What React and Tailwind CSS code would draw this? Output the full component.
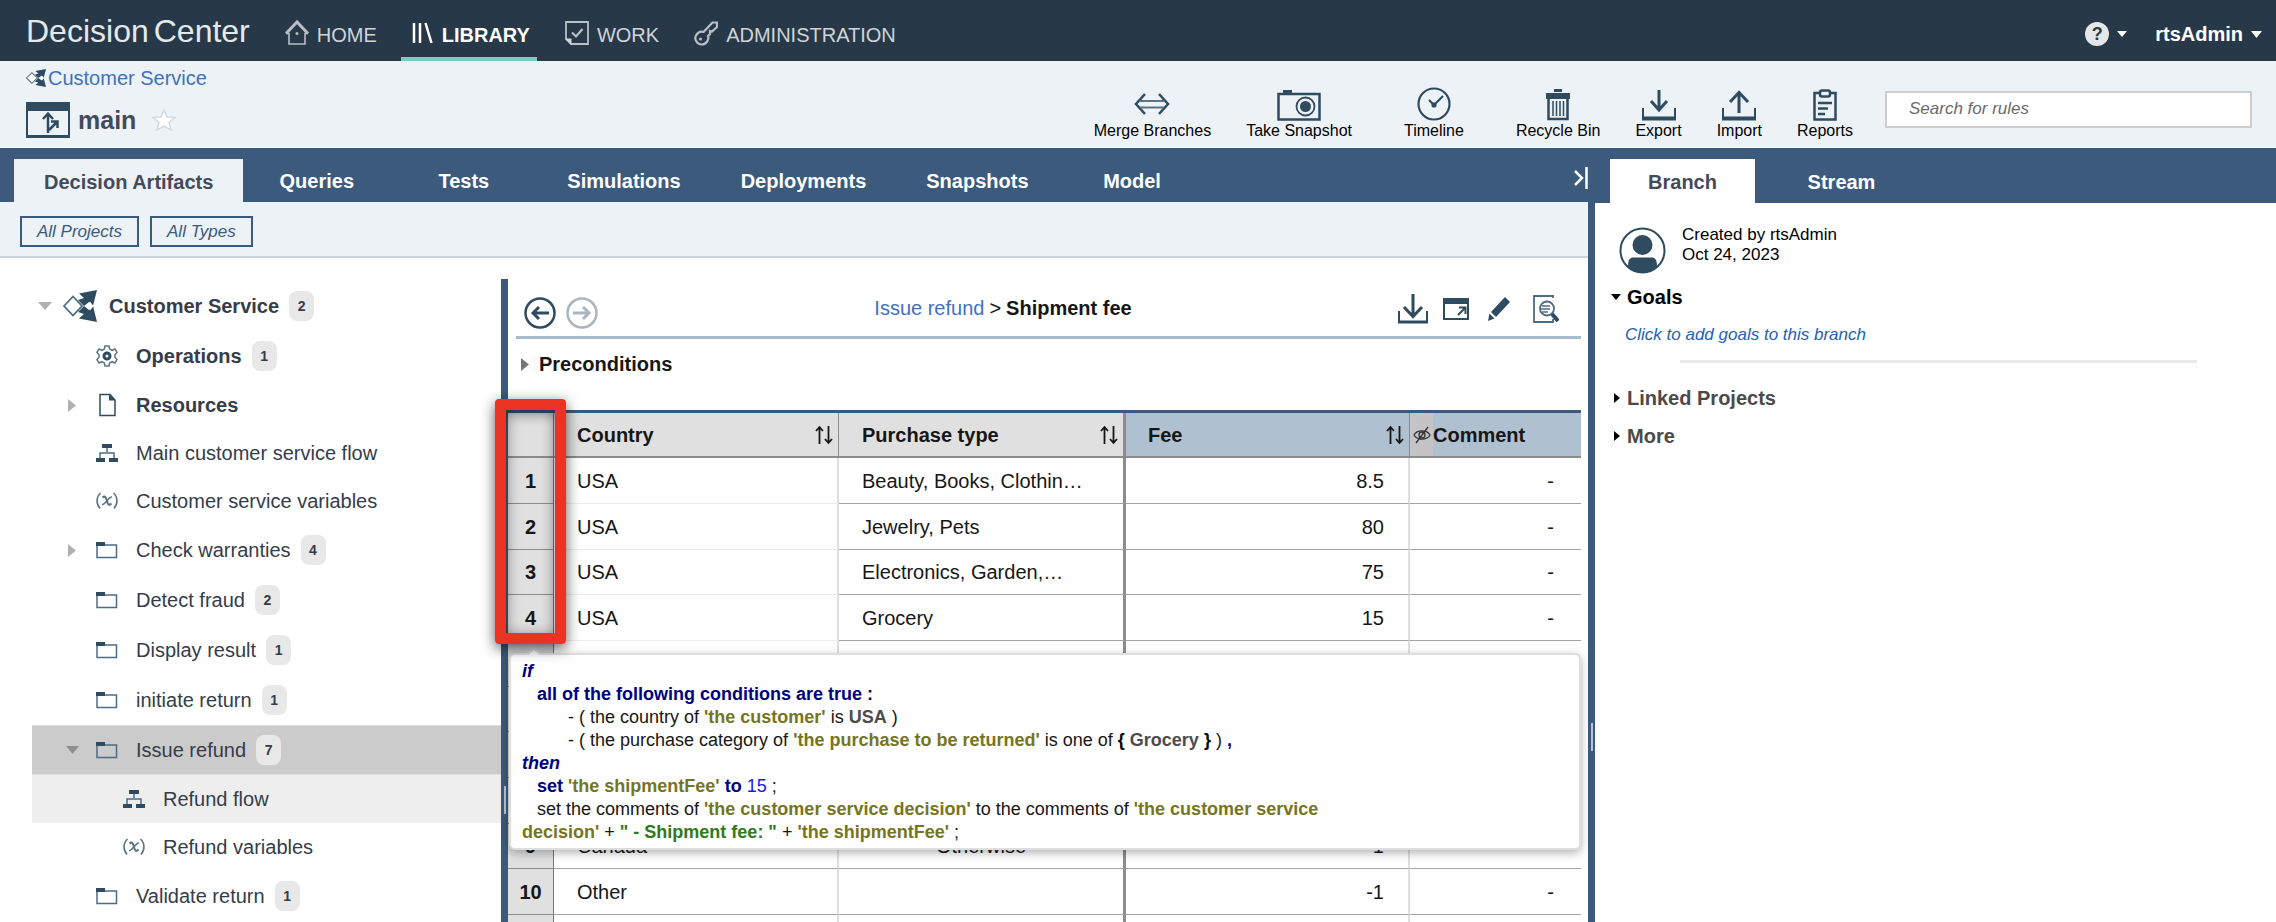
const INK = '#2f4b60';

function Svg({ w, h, children, ...rest }) {
  return (
    <svg width={w} height={h} viewBox={`0 0 ${w} ${h}`} fill="none" stroke={INK} strokeWidth="2" className="shrink-0" aria-hidden="true" {...rest}>
      {children}
    </svg>
  );
}

function ProjectIcon({ w = 34, h = 32 }) {
  return (
    <svg width={w} height={h} viewBox="0 0 34 32" preserveAspectRatio="none" fill="none" className="shrink-0" aria-hidden="true">
      <path d="M1 16 10 6.500 19 16 10 25.500Z" stroke="#4d6b85" strokeWidth="1.800" fill="#fff" />
      <path d="M15 10 21 8 16 3.500 34 0 30 16 26 12 21 16 26 20 30 16 34 32 16 28.500 21 24 15 22 21 16Z" fill={INK} />
      <path d="M27 11.500 30.500 16 27 20.500 24 16Z" fill="#fff" />
    </svg>
  );
}

const FolderIcon = () => (
  <Svg w={22} h={18} stroke="#4d6b85" strokeWidth="1.500">
    <path d="M1 4H20.500V16.500H1Z" />
    <path d="M0 1H9V5H0Z" fill={INK} stroke="none" />
  </Svg>
);
const FlowIcon = () => (
  <Svg w={22} h={20} strokeWidth="1.500" stroke="#4d6b85">
    <path d="M11 4V9M4 15V10H18V15" />
    <path d="M6 1H16V5H6ZM0 15H9V19H0ZM13 15H22V19H13Z" fill={INK} stroke="none" />
  </Svg>
);
const VarIcon = () => (
  <Svg w={22} h={18} strokeWidth="1.600" stroke="#5c7284">
    <path d="M4.500 1C0 5 0 12 4 16.500M17.500 1C22 5 22 12 18 16.500" />
    <path d="M6.500 5.500C9 3.500 10 5 11 9S13 14 15.500 11.500" strokeWidth="2" />
    <path d="M16 5C13 4 9 13.500 6 12.500" strokeWidth="1.600" />
  </Svg>
);
const GearIcon = () => (
  <Svg w={22} h={22} stroke="#5c7284" strokeWidth="1.500">
    <path d="M9 1h4l.6 3 2.400 1.300L19 4l2 3.500-2 2.200v2.600l2 2.200-2 3.500-3-1.300L13.600 18 13 21H9l-.6-3L6 16.700 3 18 1 14.500l2-2.200V9.700L1 7.500 3 4l3 1.300L8.400 4Z" />
    <circle cx="11" cy="11" r="3" stroke={INK} strokeWidth="3" />
  </Svg>
);
const PageIcon = () => (
  <Svg w={22} h={24} strokeWidth="1.500">
    <path d="M4 1.500H14L19 7V22.500H4Z" />
    <path d="M13 1 19.500 7.500H13Z" fill={INK} stroke="none" />
  </Svg>
);
const SortIcon = () => (
  <Svg w={20} h={20} stroke="#161616" strokeWidth="1.800">
    <path d="M5.500 19V2M2 6 5.500 2 9 6M14.500 1V18M11 14 14.500 18 18 14" />
  </Svg>
);
const DownloadIcon = () => (
  <Svg w={30} h={30}>
    <path d="M15 0V22M6 13 15 22.500 24 13" strokeWidth="3" />
    <path d="M1 17V28M29 17V28" />
    <path d="M0 28H30" strokeWidth="3" />
  </Svg>
);

const Caret = ({ dir = 'down', color = '#fff', w = 10, h = 6 }) => (
  <svg width={w} height={h} viewBox="0 0 10 10" preserveAspectRatio="none" className="shrink-0" aria-hidden="true">
    <path d={dir === 'down' ? 'M0 0H10L5 10Z' : 'M0 0 10 5 0 10Z'} fill={color} />
  </svg>
);

const NAV = [
  {
    label: 'HOME',
    icon: (
      <Svg w={24} h={26} stroke="#b9bfc5">
        <path d="M1 13.500 12 2 23 13.500" strokeWidth="3" />
        <path d="M1 13.500H4V24H20V13.500H23" strokeWidth="1.600" />
        <circle cx="12" cy="13.500" r="1.500" fill="#b9bfc5" stroke="none" />
      </Svg>
    ),
  },
  {
    label: 'LIBRARY',
    active: true,
    icon: (
      <Svg w={22} h={24} stroke="#fff" strokeWidth="2.500">
        <path d="M2 2V22M8 2V22M13.500 2 19.500 22" />
      </Svg>
    ),
  },
  {
    label: 'WORK',
    icon: (
      <Svg w={24} h={24} stroke="#b9bfc5" strokeWidth="1.800">
        <path d="M1 1H23V23H6L1 18Z" />
        <path d="M0 17.500H6.500V24Z" fill="#d0d4d8" stroke="none" />
        <path d="M7 11.500 11 15.500 17.500 8" strokeWidth="2.200" />
      </Svg>
    ),
  },
  {
    label: 'ADMINISTRATION',
    icon: (
      <Svg w={24} h={26} stroke="#b9bfc5" strokeWidth="2.200">
        <path d="M9.500 12 18.500 2.500H23V7L18 11.500 16 11 16 14 14 16C15.500 20 12 24.500 7.500 24.500S0 19 2 15.500 7 11 9.500 12Z" />
        <circle cx="6.500" cy="19" r="1.500" fill="#b9bfc5" stroke="none" />
      </Svg>
    ),
  },
];

const TOOLS = [
  {
    label: 'Merge Branches',
    icon: (
      <Svg w={36} h={32} strokeWidth="2.500">
        <path d="M11 5 2 15 11 25M25 5 34 15 25 25" />
        <path d="M6 12H30M6 18.500H30" strokeWidth="2" stroke="#5c7284" />
      </Svg>
    ),
  },
  {
    label: 'Take Snapshot',
    icon: (
      <Svg w={44} h={32} strokeWidth="2.500">
        <path d="M1.500 5H42.500V30.500H1.500Z" />
        <path d="M6 1H15V5H6Z" fill={INK} stroke="none" />
        <circle cx="28.500" cy="17.500" r="9" strokeWidth="1.800" />
        <circle cx="28.500" cy="17.500" r="5.500" fill={INK} stroke="none" />
      </Svg>
    ),
  },
  {
    label: 'Timeline',
    wide: true,
    icon: (
      <Svg w={34} h={34} strokeWidth="2.200">
        <circle cx="17" cy="17" r="15.500" />
        <path d="M12 13 17 18 26 9" />
        <circle cx="17" cy="18" r="1.500" fill={INK} />
      </Svg>
    ),
  },
  {
    label: 'Recycle Bin',
    icon: (
      <Svg w={24} h={32}>
        <path d="M8 0H16V3H8ZM0 4H24V10H0Z" fill={INK} stroke="none" />
        <path d="M2.500 10V30H21.500V10" strokeWidth="2.500" />
        <path d="M7 12V27M10.500 12V27M14 12V27M17.500 12V27" strokeWidth="1.500" />
      </Svg>
    ),
  },
  {
    label: 'Export',
    icon: (
      <Svg w={34} h={32}>
        <path d="M17 1V20M9 12 17 21 25 12" strokeWidth="3" />
        <path d="M1 19V30M33 19V30" />
        <path d="M0 29.500H34" strokeWidth="4" />
      </Svg>
    ),
  },
  {
    label: 'Import',
    icon: (
      <Svg w={34} h={32}>
        <path d="M17 24V4M8 13 17 3.500 26 13" strokeWidth="3" />
        <path d="M1 19V30M33 19V30" />
        <path d="M0 29.500H34" strokeWidth="4" />
      </Svg>
    ),
  },
  {
    label: 'Reports',
    icon: (
      <Svg w={24} h={32} strokeWidth="2.500">
        <path d="M6 4H1.500V30.500H22.500V4H18" />
        <rect x="7" y="1.500" width="10" height="6" rx="2" />
        <path d="M5 14H19M5 19.500H15M5 25H12" />
      </Svg>
    ),
  },
];

const TABS = ['Decision Artifacts', 'Queries', 'Tests', 'Simulations', 'Deployments', 'Snapshots', 'Model'];

const TREE = [
  { label: 'Operations', count: 1, icon: GearIcon, bold: true },
  { label: 'Resources', icon: PageIcon, bold: true, arrow: 'right' },
  { label: 'Main customer service flow', icon: FlowIcon },
  { label: 'Customer service variables', icon: VarIcon },
  { label: 'Check warranties', count: 4, icon: FolderIcon, arrow: 'right' },
  { label: 'Detect fraud', count: 2, icon: FolderIcon },
  { label: 'Display result', count: 1, icon: FolderIcon },
  { label: 'initiate return', count: 1, icon: FolderIcon },
  { label: 'Issue refund', count: 7, icon: FolderIcon, arrow: 'down', selected: true },
  { label: 'Refund flow', icon: FlowIcon, child: true, shaded: true },
  { label: 'Refund variables', icon: VarIcon, child: true },
  { label: 'Validate return', count: 1, icon: FolderIcon },
];

const ROWS = [
  { n: '1', country: 'USA', type: 'Beauty, Books, Clothin…', fee: '8.5', comment: '-', span: true },
  { n: '2', country: 'USA', type: 'Jewelry, Pets', fee: '80', comment: '-', span: true },
  { n: '3', country: 'USA', type: 'Electronics, Garden,…', fee: '75', comment: '-', span: true },
  { n: '4', country: 'USA', type: 'Grocery', fee: '15', comment: '-', span: true },
  {},
  {},
  {},
  {},
  { n: '9', country: 'Canada', type: 'Otherwise', center: true, fee: '-1', comment: '' },
  { n: '10', country: 'Other', type: '', fee: '-1', comment: '-' },
  {},
];

function Count({ children }) {
  return <span className="flex h-[30px] w-[25px] items-center justify-center rounded-lg bg-[#e8e8e8] text-sm font-bold">{children}</span>;
}

function TreeRow({ item }) {
  const Icon = item.icon;
  return (
    <li
      className={`ml-8 flex items-center ${item.count ? 'h-[50px]' : 'h-12'} ${item.selected ? 'border-y border-[#dedede] bg-[#cbcbcb]' : ''} ${item.shaded ? 'bg-[#eeeeee]' : ''}`}
    >
      <span className={`flex justify-center ${item.child ? 'w-[91px]' : 'w-16'}`}>
        {item.arrow && (
          <span className="flex w-14 justify-center pl-4">
            {item.arrow === 'right' ? <Caret dir="right" color="#b0b0b0" w={8} h={13} /> : <Caret color="#909090" w={13} h={8} />}
          </span>
        )}
      </span>
      <Icon />
      <a href="#" className={`ml-[18px] mr-[10px] ${item.bold ? 'font-bold' : ''}`}>
        {item.label}
      </a>
      {item.count && <Count>{item.count}</Count>}
    </li>
  );
}

const V = ({ children }) => <b className="text-[#76751f]">{children}</b>;
const K = ({ children }) => <b className="text-[#000080]">{children}</b>;

function RuleTooltip() {
  return (
    <div role="tooltip" className="absolute inset-x-0 top-[243px] ml-px rounded-md border-2 border-[#dedede] bg-[#fefefe] pb-[4px] pl-[11px] pt-[5px] text-lg leading-[23px] text-[#161616] shadow-[0_3px_10px_rgba(0,0,0,0.3)]">
      <div className="absolute -top-[6px] left-[18px] size-[10px] rotate-45 border-l-2 border-t-2 border-[#dedede] bg-[#fefefe]" />
      <p><i><K>if</K></i></p>
      <p className="pl-[15px]"><K>all of the following conditions are true :</K></p>
      <p className="pl-[46px]">- ( the country of <V>'the customer'</V> is <b className="text-[#4d4d4d]">USA</b> )</p>
      <p className="pl-[46px]">
        - ( the purchase category of <V>'the purchase to be returned'</V> is one of <b className="text-black">{'{'}</b> <b className="text-[#4d4d4d]">Grocery</b> <b className="text-black">{'}'}</b> ) <K>,</K>
      </p>
      <p><i><K>then</K></i></p>
      <p className="pl-[15px]"><K>set</K> <V>'the shipmentFee'</V> <K>to</K> <span className="text-[#1a1ae6]">15</span> ;</p>
      <p className="pl-[15px]">set the comments of <V>'the customer service decision'</V> to the comments of <V>'the customer service</V></p>
      <p><V>decision'</V> + <b className="text-[#2f7a1a]">" - Shipment fee: "</b> + <V>'the shipmentFee'</V> ;</p>
    </div>
  );
}

function RuleTable() {
  const th = 'h-[45px] border-b-2 border-b-[#8c8c8c] p-0 text-left font-bold';
  return (
    <table className="w-full table-fixed border-separate border-spacing-0 border-t-[3px] border-t-[#3b5a7c] text-[#161616]">
      <colgroup>
        <col className="w-[46px]" />
        <col className="w-[285px]" />
        <col className="w-[287px]" />
        <col className="w-[284px]" />
        <col />
      </colgroup>
      <thead>
        <tr>
          <th className={`${th} border-r border-r-[#777] bg-[#e0e0e0]`} aria-label="Row" />
          <th className={`${th} border-r border-r-[#8c8c8c] bg-[#e0e0e0]`}>
            <div className="flex items-center justify-between pl-[23px] pr-1">Country<SortIcon /></div>
          </th>
          <th className={`${th} border-r-[3px] border-r-[#8c8c8c] bg-[#e0e0e0]`}>
            <div className="flex items-center justify-between pl-[23px] pr-1">Purchase type<SortIcon /></div>
          </th>
          <th className={`${th} border-r border-r-[#8c8c8c] bg-[#afc0d1]`}>
            <div className="flex items-center justify-between pl-[22px] pr-1">Fee<SortIcon /></div>
          </th>
          <th className={`${th} bg-[#afc0d1]`}>
            <div className="flex h-full items-center">
              <span className="flex h-[43px] w-[23px] items-center justify-center bg-[#c4c4c4]">
                <Svg w={18} h={18} stroke="#333" strokeWidth="1.300">
                  <path d="M1 9C4 3.500 14 3.500 17 9 14 14.500 4 14.500 1 9ZM3 17 15 1" />
                  <circle cx="9" cy="9" r="3" />
                </Svg>
              </span>
              Comment
            </div>
          </th>
        </tr>
      </thead>
      <tbody>
        {ROWS.map((r, i) => (
          <tr key={i} className="h-[46px] [&:nth-child(3n)]:h-[45px] [&>td]:border-b [&>td]:border-b-[#a3a3a3] [&>td]:p-0">
            <th scope="row" className="border-b border-r border-b-[#8c8c8c] border-r-[#777] bg-[#e0e0e0] p-0 text-center font-bold">{r.n}</th>
            <td className={`border-r-2 border-r-[#dedede] ${r.span ? 'border-b-[#ececec]!' : ''}`}>
              <div className="pl-[23px]">{r.country}</div>
            </td>
            <td className="border-r-[3px] border-r-[#8c8c8c]">
              <div className={r.center ? 'text-center' : 'pl-[23px]'}>{r.type}</div>
            </td>
            <td className="border-r-2 border-r-[#dedede]">
              <div className="pr-6 text-right">{r.fee}</div>
            </td>
            <td>
              <div className="pr-[27px] text-right">{r.comment}</div>
            </td>
          </tr>
        ))}
      </tbody>
    </table>
  );
}

function Center() {
  return (
    <section className="min-w-0 flex-1 pr-[7px]">
      <div className="ml-2 flex h-[60px] items-center justify-between border-b-[3px] border-[#a9bbcf]">
        <div className="flex items-center gap-[10px] pl-2 pt-[10px]">
          <button aria-label="Back">
            <Svg w={32} h={32} strokeWidth="2.500">
              <circle cx="16" cy="16" r="14.500" />
              <path d="M25 16H9M15 10 9 16 15 22" strokeWidth="3" />
            </Svg>
          </button>
          <button aria-label="Forward">
            <Svg w={32} h={32} stroke="#aab5bf" strokeWidth="2.500">
              <circle cx="16" cy="16" r="14.500" />
              <path d="M7 16H23M17 10 23 16 17 22" strokeWidth="3" />
            </Svg>
          </button>
        </div>
        <div className="flex gap-[5px] pl-[10px] text-[#161616]">
          <a href="#" className="text-[#4071bf]">Issue refund</a>
          <span>&gt;</span>
          <b>Shipment fee</b>
        </div>
        <div className="flex items-center gap-[15px] pr-[22px] pt-[2px]">
          <button aria-label="Download"><DownloadIcon /></button>
          <button aria-label="Open in window">
            <Svg w={26} h={22}>
              <path d="M1 1H25V21H1Z" />
              <path d="M0 0H26V6H0Z" fill={INK} stroke="none" />
              <path d="M15 17 22 10M16 9.500H22.500V16" />
            </Svg>
          </button>
          <button aria-label="Edit" className="px-1">
            <Svg w={22} h={24} stroke="none" fill={INK}>
              <path d="M17 0 22 5 8 20 3 15ZM1.500 16.500 6.500 21.500 0 24Z" />
            </Svg>
          </button>
          <button aria-label="Review" className="pl-1">
            <Svg w={26} h={28} stroke="#4d6b85" strokeWidth="1.800">
              <path d="M20 3V1H1V27H20V24" />
              <circle cx="14" cy="13.500" r="7" />
              <path d="M9 11H17M8 14H17M9 17H15" strokeWidth="1.500" />
              <path d="M19 19 25 26" strokeWidth="4" stroke={INK} />
            </Svg>
          </button>
        </div>
      </div>
      <button className="flex h-[50px] items-center gap-[10px] pl-[13px] font-bold text-[#161616]">
        <Caret dir="right" color="#777" w={8} h={13} />
        Preconditions
      </button>
      <div className="relative mt-[21px]">
        <RuleTable />
        <RuleTooltip />
        <div className="absolute -left-[13px] -top-[11px] h-[245px] w-[71px] rounded border-[11px] border-[#ea3323] shadow-[0_4px_14px_rgba(0,0,0,0.65),inset_0_3px_14px_rgba(0,0,0,0.5)]" />
      </div>
    </section>
  );
}

function Splitter({ className }) {
  return (
    <div className={`flex w-[7px] shrink-0 flex-col items-center bg-[#3b5a7c] ${className}`}>
      <span className="h-7 w-[2px] bg-[#b5c3d2]" />
    </div>
  );
}

export default function App() {
  return (
    <div className="flex h-screen flex-col overflow-hidden bg-white font-['Liberation_Sans',Arial,sans-serif] text-xl leading-6 text-[#353c4a]">
      <header className="flex h-[61px] shrink-0 items-center bg-[#273949] pl-[26px] pr-[14px]">
        <div className="flex gap-[5px] text-[32px] leading-none text-[#e6e9ec]">
          <span>Decision</span>
          <span>Center</span>
        </div>
        <nav className="ml-[24px] flex h-full items-stretch gap-[17px] text-[#d0d4d8]">
          {NAV.map((n) => (
            <a
              key={n.label}
              href="#"
              className={`flex items-center gap-2 border-b-4 pl-[11px] pr-[7px] pt-3 ${n.active ? 'border-[#6ed0c0] font-bold text-white' : 'border-transparent'}`}
            >
              <span className="pb-1">{n.icon}</span>
              {n.label}
            </a>
          ))}
        </nav>
        <div className="ml-auto flex items-center gap-7 pt-[7px] text-white">
          <button className="flex items-center gap-2" aria-label="Help">
            <span className="flex size-6 items-center justify-center rounded-full bg-[#e4e6e8] text-lg font-bold text-[#273949]">?</span>
            <Caret />
          </button>
          <button className="flex items-center gap-2 font-bold">rtsAdmin<Caret w={11} h={7} /></button>
        </div>
      </header>

      <div className="flex h-[87px] shrink-0 items-center border-b border-white bg-[#edf2f7] pl-[26px] pr-6">
        <div className="flex flex-col gap-3 pb-[5px]">
          <div className="flex items-center gap-[2px]">
            <ProjectIcon w={20} h={18} />
            <a href="#" className="text-[#4071bf]">Customer Service</a>
          </div>
          <div className="flex items-center gap-[8px]">
            <Svg w={44} h={36}>
              <path d="M1 1H43V35H1Z" />
              <path d="M0 0H44V9H0ZM0 33H44V36H0Z" fill={INK} stroke="none" />
              <path d="M22 31V12M17 17 22 11.500 27 17M23 28 31 20M25 19.500H31.500V26" strokeWidth="2.500" />
            </Svg>
            <h1 className="text-[25px] font-bold leading-7 text-[#454a5a]">main</h1>
            <button aria-label="Favorite" className="ml-2">
              <Svg w={24} h={22} stroke="#d5d8dc" strokeWidth="1.500" fill="#fff">
                <path d="M12 1 15 8 23 8.500 17 13.500 19 21 12 17 5 21 7 13.500 1 8.500 9 8Z" />
              </Svg>
            </button>
          </div>
        </div>
        <div className="ml-auto flex items-end gap-[35px] pt-5">
          {TOOLS.map((t) => (
            <button key={t.label} className={`flex flex-col items-center text-base leading-5 text-black ${t.wide ? 'mx-[17px]' : ''}`}>
              {t.icon}
              {t.label}
            </button>
          ))}
        </div>
        <div className="ml-8 pt-[10px]">
          <input
            type="search"
            aria-label="Search for rules"
            placeholder="Search for rules"
            className="block h-[37px] w-[367px] border-2 border-[#cdcdcd] bg-white px-[22px] text-[17px] italic placeholder:text-[#6b6b6b]"
          />
        </div>
      </div>

      <div className="flex min-h-0 flex-1">
        <main className="flex min-w-0 flex-1 flex-col">
          <div className="flex h-[54px] shrink-0 items-end bg-[#3b5a7c] pl-[14px]">
            {TABS.map((t, i) => (
              <button
                key={t}
                className={`flex h-[43px] min-w-[147px] items-center justify-center px-[30px] font-bold ${i === 0 ? 'bg-[#edf2f7] pt-[3px] text-[#454a5a]' : 'text-white'}`}
              >
                {t}
              </button>
            ))}
            <button aria-label="Collapse panel" className="mb-3 ml-auto">
              <Svg w={14} h={24} stroke="#fff" strokeWidth="2.500">
                <path d="M1 5 8 12 1 19M12.500 1V23" />
              </Svg>
            </button>
          </div>
          <div className="flex h-[56px] shrink-0 items-center gap-[11px] border-b-2 border-[#cdd2d6] bg-[#edf2f7] pl-5 pt-[5px]">
            {['All Projects', 'All Types'].map((f) => (
              <button key={f} className="flex h-[31px] items-center border-2 border-[#3b5a7c] px-[15px] text-[17px] italic text-[#3b5a7c]">
                {f}
              </button>
            ))}
          </div>
          <div className="flex min-h-0 flex-1 pt-[21px]">
            <ul className="w-[501px] shrink-0 pt-[2px]">
              <li className="ml-8 flex h-[50px] items-center pl-[6px] text-[#353c4a]">
                <Caret color="#b0b0b0" w={14} h={8} />
                <span className="ml-[11px] mr-[12px] flex"><ProjectIcon /></span>
                <a href="#" className="mr-[10px] font-bold">Customer Service</a>
                <Count>2</Count>
              </li>
              {TREE.map((t) => (
                <TreeRow key={t.label} item={t} />
              ))}
            </ul>
            <Splitter className="pt-[507px]" />
            <Center />
          </div>
        </main>

        <aside className="flex w-[688px] shrink-0 flex-col">
          <div className="flex h-[55px] shrink-0 items-end bg-[#3b5a7c] pl-[22px] font-bold">
            <button className="flex h-11 w-[145px] items-center justify-center bg-white pt-[2px] text-[#454a5a]">Branch</button>
            <button className="ml-[14px] flex h-11 w-[145px] items-center justify-center pt-[2px] text-white">Stream</button>
          </div>
          <div className="flex min-h-0 flex-1">
            <Splitter className="pt-[520px]" />
            <div className="min-w-0 flex-1 pl-4 pt-[22px] text-black">
              <div className="flex gap-4 pl-2 text-[17px] leading-5">
                <Svg w={47} h={50} stroke={INK}>
                  <circle cx="23.500" cy="25.500" r="22" />
                  <circle cx="23.500" cy="20" r="10" fill={INK} stroke="none" />
                  <path d="M9 42C9 34 11 32.500 15 32.500H32C36 32.500 38 34 38 42 30 50 17 50 9 42Z" fill={INK} stroke="none" />
                </Svg>
                <p>Created by rtsAdmin<br />Oct 24, 2023</p>
              </div>
              <button className="mt-[10px] flex items-center gap-[6px] font-bold"><Caret color="#000" w={10} h={6} />Goals</button>
              <a href="#" className="ml-[14px] mt-[14px] block text-[17px] italic text-[#2460b5]">Click to add goals to this branch</a>
              <hr className="ml-[69px] mr-[79px] mt-[13px] border-t-[3px] border-[#eaeaea]" />
              <button className="mt-[23px] flex items-center gap-[7px] pl-[3px] font-bold text-[#4a4a4a]"><Caret dir="right" color="#000" w={6} h={10} />Linked Projects</button>
              <button className="mt-[14px] flex items-center gap-[7px] pl-[3px] font-bold text-[#4a4a4a]"><Caret dir="right" color="#000" w={6} h={10} />More</button>
            </div>
          </div>
        </aside>
      </div>
    </div>
  );
}
